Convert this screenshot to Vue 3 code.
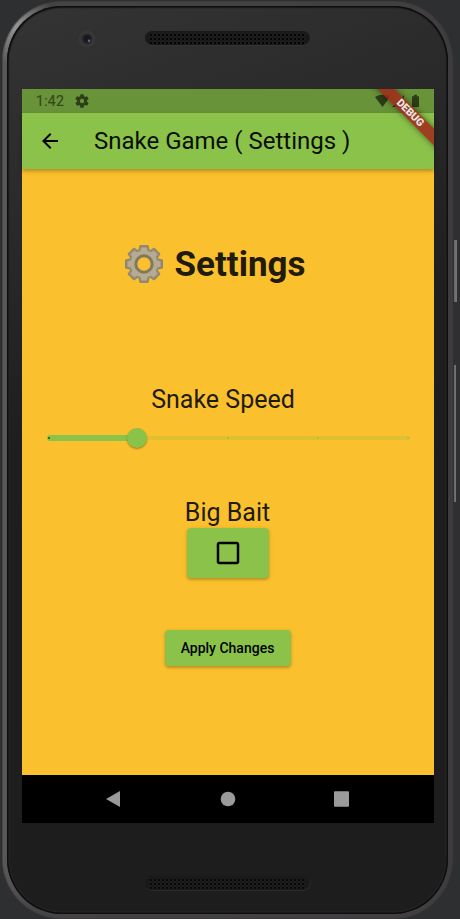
<script setup>
import { ref } from 'vue'

const speed = ref(1)
const maxSpeed = 4
const bigBait = ref(false)
const stops = [0, 1, 2, 3, 4]
const teeth = [0, 45, 90, 135, 180, 225, 270, 315]
</script>

<template>
  <div class="stage">
    <i class="key power"></i>
    <i class="key volume"></i>
    <div class="phone">
      <div class="bezel">
        <div class="top-bezel">
          <svg class="camera" width="18" height="18" viewBox="0 0 18 18">
            <circle cx="9" cy="9" r="8.5" fill="#373738" />
            <circle cx="9" cy="9" r="5.4" fill="#29282c" />
            <circle cx="9" cy="8.7" r="3.6" fill="#1a1722" />
            <circle cx="11" cy="10.7" r="1.2" fill="#75616b" />
          </svg>
          <div class="speaker"><i class="mesh"></i></div>
        </div>

        <div class="screen">
          <div class="status">
            <span class="clock">1:42</span>
            <svg class="cog" width="14" height="14" viewBox="2 2 20 20">
              <path d="M19.14 12.94c.04-.3.06-.61.06-.94 0-.32-.02-.64-.07-.94l2.03-1.58a.49.49 0 0 0 .12-.61l-1.92-3.32a.49.49 0 0 0-.59-.22l-2.39.96a7 7 0 0 0-1.62-.94l-.36-2.54a.48.48 0 0 0-.48-.41h-3.84a.47.47 0 0 0-.47.41l-.36 2.54c-.59.24-1.13.57-1.62.94l-2.39-.96a.48.48 0 0 0-.59.22L2.74 8.87a.47.47 0 0 0 .12.61l2.03 1.58c-.05.3-.09.63-.09.94s.02.64.07.94l-2.03 1.58a.49.49 0 0 0-.12.61l1.92 3.32c.12.22.37.29.59.22l2.39-.96c.5.38 1.03.7 1.62.94l.36 2.54c.05.24.24.41.48.41h3.84c.24 0 .44-.17.47-.41l.36-2.54a7 7 0 0 0 1.62-.94l2.39.96c.22.08.47 0 .59-.22l1.92-3.32a.47.47 0 0 0-.12-.61zM12 15.1A3.1 3.1 0 1 1 12 8.900a3.100 3.100 0 0 1 0 6.200z" />
            </svg>
            <span class="grow"></span>
            <svg class="signals" width="48" height="16" viewBox="0 0 48 16">
              <path d="M0 4.100Q7.500-.700 15 4.100L7.500 14z" />
              <path d="M17 14 29 2v12z" />
              <path d="M37 3.200h2V1.700h3v1.500h2V14h-7z" />
            </svg>
          </div>

          <header class="appbar">
            <svg class="back" width="24" height="24" viewBox="0 0 24 24">
              <path d="M20 11H7.830l5.590-5.590L12 4l-8 8 8 8 1.410-1.410L7.830 13H20z" />
            </svg>
            <span class="title">Snake Game ( Settings )</span>
          </header>

          <main class="body">
            <h1 class="heading">
              <svg class="gear" width="40" height="40" viewBox="-20 -20 40 40">
                <g fill="#928970" stroke="#928970" stroke-width="2" stroke-linejoin="round">
                  <path v-for="a in teeth" :key="a" :transform="`rotate(${a})`" d="M-5-12-3.700-18H3.700L5-12z" />
                </g>
                <circle r="15" fill="#928970" />
                <g fill="#b5ab91">
                  <path v-for="a in teeth" :key="a" :transform="`rotate(${a})`" d="M-4-11-2.700-16.500H2.700L4-11z" />
                </g>
                <circle r="13.500" fill="#b5ab91" />
                <circle r="8.200" fill="#fbc02d" stroke="#83785f" stroke-width="3" />
              </svg>
              <span>Settings</span>
            </h1>

            <div class="label speed-label">Snake Speed</div>
            <div class="slider">
              <i class="rail"></i>
              <i class="filled" :style="{ width: (speed / maxSpeed) * 100 + '%' }"></i>
              <i
                v-for="s in stops"
                :key="s"
                class="tick"
                :class="{ dark: s < speed }"
                :style="{ left: (s / maxSpeed) * 100 + '%' }"
              ></i>
              <i class="thumb" :style="{ left: (speed / maxSpeed) * 100 + '%' }"></i>
            </div>

            <div class="label bait-label">Big Bait</div>
            <button class="raised toggle" @click="bigBait = !bigBait">
              <svg width="30" height="30" viewBox="0 0 24 24">
                <path d="M19 5v14H5V5h14m0-2H5c-1.100 0-2 .9-2 2v14c0 1.100.9 2 2 2h14c1.100 0 2-.9 2-2V5c0-1.100-.9-2-2-2z" />
                <path v-if="bigBait" d="m10 17-4-4 1.400-1.400 2.600 2.600 6.600-6.600L18 9z" />
              </svg>
            </button>
            <button class="raised apply">Apply Changes</button>
          </main>

          <nav class="nav">
            <svg width="16" height="16" viewBox="0 0 16 16"><path d="M0 8 14 0v16z" /></svg>
            <svg width="16" height="16" viewBox="0 0 16 16"><circle cx="8" cy="8" r="7.300" /></svg>
            <svg width="16" height="16" viewBox="0 0 16 16"><rect x="0" y=".300" width="15" height="15.400" rx="1" /></svg>
          </nav>

          <div class="ribbon-clip"><span class="ribbon">DEBUG</span></div>
        </div>

        <div class="bottom-bezel">
          <div class="speaker"><i class="mesh dim"></i></div>
        </div>
      </div>
    </div>
  </div>
</template>

<style>
body {
  background: #2d2f31;
}
</style>

<style scoped>
.stage {
  position: relative;
  box-sizing: border-box;
  width: 460px;
  height: 919px;
  padding: 1px 0 0 2px;
  overflow: hidden;
  background: #2d2f31;
  font-family: Roboto, sans-serif;
}
.key {
  position: absolute;
  background: linear-gradient(90deg, #666, #777);
}
.power {
  left: 454px;
  top: 240px;
  width: 3px;
  height: 62px;
}
.volume {
  left: 454px;
  top: 365px;
  width: 2px;
  height: 137px;
}
.phone {
  box-sizing: border-box;
  width: 451px;
  height: 918px;
  padding: 5px;
  border-radius: 60px;
  background:
    radial-gradient(circle at 13px 24px, rgba(200, 200, 200, 0.6), transparent 40px),
    linear-gradient(90deg, #5a5858 0, #454344 30px, #413f40 420px, #3d3b3d);
  box-shadow: inset 0 0 0 1px rgba(60, 58, 60, 0.6);
}
.bezel {
  box-sizing: border-box;
  width: 441px;
  height: 908px;
  padding: 83px 15px 0;
  border-radius: 55px;
  background: linear-gradient(160deg, #343435 0, #29292a 22%, #1e1e1f 42%, #1d1d1e 100%);
  box-shadow:
    inset 0 0 0 1.5px #0e0e0f,
    inset 0 0 0 2.5px #262627;
}
.top-bezel {
  position: relative;
  display: flex;
  justify-content: center;
  height: 58px;
  margin-top: -58px;
}
.camera {
  position: absolute;
  left: 56px;
  top: -1px;
}
.speaker {
  box-sizing: border-box;
  width: 165px;
  height: 14px;
  padding: 2px 4px;
  border-radius: 7px;
  background: #19191a;
  box-shadow: 0.5px 0.5px 0 #38383a;
}
.mesh {
  display: block;
  width: 157px;
  height: 11px;
  background: radial-gradient(circle at 2px 2px, #050505 0.8px, #2a2a2b 1.1px, transparent 1.7px) 0 0 / 4px 4px;
}
.mesh.dim {
  opacity: 0.85;
}
.bottom-bezel {
  display: flex;
  justify-content: center;
  padding-top: 53px;
}
.screen {
  position: relative;
  display: flex;
  flex-direction: column;
  width: 412px;
  height: 734px;
  background: #fbc02d;
}
.status {
  box-sizing: border-box;
  display: flex;
  align-items: center;
  height: 24px;
  padding: 0 14px;
  background: #689338;
  color: #344a1c;
  fill: #2c3e18;
}
.clock {
  font-size: 14px;
  letter-spacing: 0.3px;
  -webkit-text-stroke: 0.2px #344a1c;
}
.cog {
  margin-left: 11px;
}
.grow {
  flex: 1;
}
.signals {
  margin-right: -3px;
}
.appbar {
  z-index: 1;
  display: flex;
  align-items: center;
  height: 56px;
  padding-left: 16px;
  background: #8bc34a;
  box-shadow: 0 2px 4px rgba(0, 0, 0, 0.3);
}
.title {
  margin-left: 32px;
  font-size: 24px;
  color: #0a0e05;
  white-space: nowrap;
}
.body {
  display: flex;
  flex-direction: column;
  align-items: center;
  height: 606px;
}
.heading {
  display: flex;
  align-items: center;
  gap: 11px;
  height: 44px;
  margin: 73px 27px 0 0;
  font-size: 35px;
  font-weight: 700;
  color: #211b0b;
}
.label {
  height: 30px;
  font-size: 25px;
  line-height: 30px;
  color: #211b0b;
  white-space: nowrap;
}
.speed-label {
  margin: 99px 10px 0 0;
}
.slider {
  position: relative;
  width: 360px;
  height: 20px;
  margin: 13px 0 0;
}
.rail,
.filled,
.tick,
.thumb {
  position: absolute;
}
.rail {
  left: 0;
  right: -2px;
  top: 8px;
  height: 4px;
  border-radius: 2px;
  background: #e0c033;
}
.filled {
  left: -1px;
  top: 7px;
  height: 6px;
  border-radius: 3px;
  background: #8bc34a;
}
.tick {
  top: 9px;
  width: 2px;
  height: 2px;
  margin-left: -1px;
  border-radius: 50%;
  background: #a7c13e;
}
.tick.dark {
  margin-left: 0;
  background: #304319;
}
.thumb {
  top: 0;
  width: 20px;
  height: 20px;
  margin-left: -11px;
  border-radius: 50%;
  background: #8bc34a;
  box-shadow: 0 1px 2px rgba(0, 0, 0, 0.35);
}
.bait-label {
  margin: 50px 1px 0 0;
}
.raised {
  display: flex;
  align-items: center;
  justify-content: center;
  flex: none;
  padding: 0;
  border: 0;
  border-radius: 4px;
  background: #8bc34a;
  color: #000;
  font-family: inherit;
  box-shadow:
    0 2px 2px rgba(0, 0, 0, 0.14),
    0 1px 4px rgba(0, 0, 0, 0.16);
}
.toggle {
  width: 82px;
  height: 50px;
}
.apply {
  width: 126px;
  height: 36px;
  margin-top: 52px;
  padding-right: 1px;
  font-size: 14px;
  font-weight: 500;
}
.nav {
  display: flex;
  align-items: center;
  justify-content: center;
  gap: 98px;
  height: 48px;
  background: #000;
  fill: #9a9a9a;
}
.ribbon-clip {
  position: absolute;
  z-index: 2;
  top: 0;
  right: 0;
  width: 80px;
  height: 80px;
  overflow: hidden;
}
.ribbon {
  position: absolute;
  top: 18px;
  right: -29px;
  width: 106px;
  height: 12px;
  transform: rotate(45deg);
  background: rgba(162, 38, 24, 0.84);
  box-shadow: 0 0 6px rgba(0, 0, 0, 0.5);
  color: #e6e6e6;
  font-size: 10.600px;
  font-weight: 900;
  line-height: 12px;
  text-align: center;
}
</style>
